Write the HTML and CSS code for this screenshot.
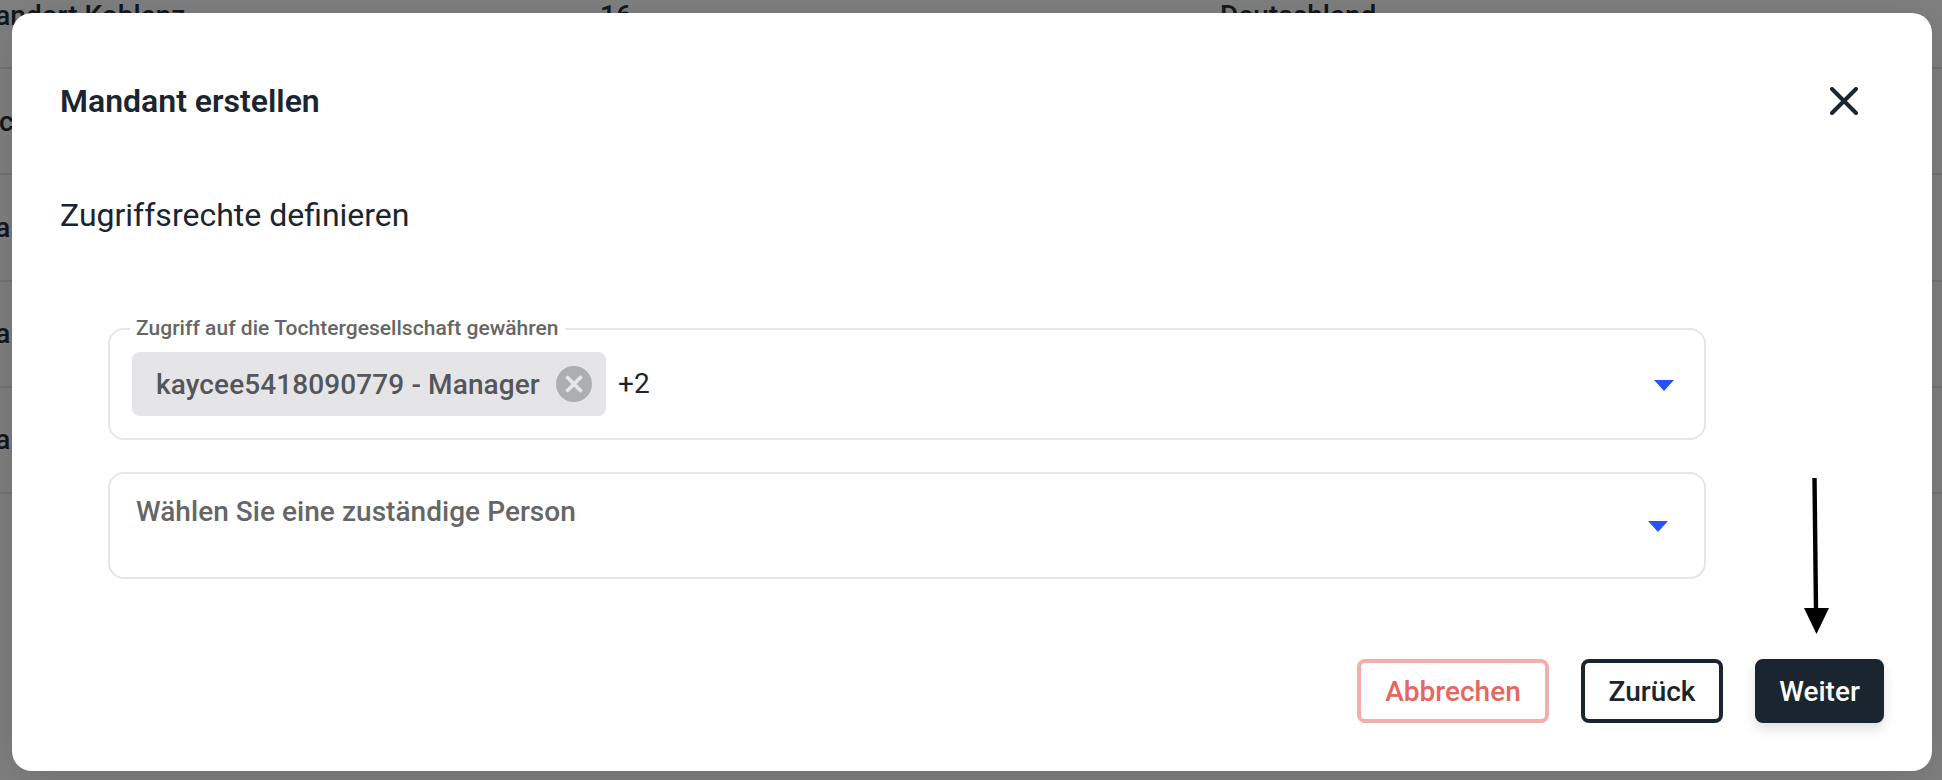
FILE: index.html
```html
<!DOCTYPE html>
<html lang="de">
<head>
<meta charset="utf-8">
<title>Mandant erstellen</title>
<link rel="stylesheet" href="styles.css">
</head>
<body>
<div class="table">
  <div class="row"><span class="name">Standort Koblenz</span><span class="count">16</span><span class="country">Deutschland</span></div>
  <div class="row"><span class="name">Fact</span></div>
  <div class="row"><span class="name">Sta</span></div>
  <div class="row"><span class="name">Sta</span></div>
  <div class="row"><span class="name">Sta</span></div>
</div>
<div class="backdrop"></div>
<section class="modal">
  <header class="modal-head">
    <h1 class="title">Mandant erstellen</h1>
    <svg class="close" viewBox="0 0 28 28" width="28" height="28"><path d="M2 2 26 26M26 2 2 26" fill="none" stroke="#1a2530" stroke-width="4" stroke-linecap="round"/></svg>
  </header>
  <h2 class="subtitle">Zugriffsrechte definieren</h2>
  <div class="field field-multi">
    <span class="legend">Zugriff auf die Tochtergesellschaft gewähren</span>
    <span class="chip">
      <span class="chip-text">kaycee5418090779 - Manager</span>
      <svg class="chip-x" viewBox="0 0 36 36" width="36" height="36"><circle cx="18" cy="18" r="18" fill="#adaeb2"/><path d="M11.5 11.5 24.5 24.5M24.5 11.5 11.5 24.5" stroke="#e6e6e9" stroke-width="3.8" stroke-linecap="round"/></svg>
    </span>
    <span class="more">+2</span>
    <span class="caret caret-multi"></span>
  </div>
  <div class="field field-single">
    <span class="placeholder">Wählen Sie eine zuständige Person</span>
    <span class="caret caret-single"></span>
  </div>
  <div class="actions">
    <button class="btn btn-cancel">Abbrechen</button>
    <button class="btn btn-back">Zurück</button>
    <button class="btn btn-next">Weiter</button>
  </div>
  <svg class="arrow" viewBox="0 0 30 156" width="30" height="156"><path d="M13.5 0 15 132" fill="none" stroke="#000" stroke-width="4.4"/><path d="M3 130H28L15.5 156Z" fill="#000"/></svg>
</section>
</body>
</html>
```
FILE: styles.css
```css
* { box-sizing: border-box; }
html, body { margin: 0; height: 100%; }
body {
  width: 1942px;
  height: 780px;
  overflow: hidden;
  position: relative;
  background: #fff;
  font-family: Roboto, "Liberation Sans", sans-serif;
  color: #1a2530;
}
.table { margin-top: -37px; }
.row {
  height: 106.2px;
  display: flex;
  align-items: center;
  border-bottom: 2px solid #e4e4e4;
  font-size: 28px;
  font-weight: 500;
  color: #27313c;
}
.name { width: 631px; margin-left: -31px; flex: none; }
.count { width: 620px; flex: none; }
.backdrop {
  position: absolute;
  inset: 0;
  background: rgba(0, 0, 0, 0.5);
}
.modal {
  position: absolute;
  left: 12px;
  top: 13px;
  width: 1920px;
  height: 758px;
  padding: 64px 48px 0;
  background: #fff;
  border-radius: 20px;
  box-shadow: 0 8px 40px rgba(0, 0, 0, 0.12);
}
.modal-head {
  height: 48px;
  display: flex;
  align-items: center;
  justify-content: space-between;
}
.title {
  margin: 0;
  font-size: 32px;
  font-weight: 600;
  line-height: 48px;
}
.close { margin-right: 26px; }
.subtitle {
  margin: 70px 0 0;
  font-size: 32px;
  font-weight: 400;
  line-height: 40px;
}
.field {
  position: relative;
  margin-left: 48px;
  width: 1598px;
  border: 2px solid #e6e6e6;
  border-radius: 16px;
  display: flex;
}
.field-multi {
  margin-top: 93px;
  height: 112px;
  padding-left: 22px;
  align-items: center;
}
.field-single {
  margin-top: 32px;
  height: 107px;
  padding: 23px 0 0 26px;
  align-items: flex-start;
}
.legend {
  position: absolute;
  left: 20px;
  top: -13px;
  padding: 0 6px;
  background: #fff;
  font-size: 21px;
  font-weight: 500;
  line-height: 22px;
  letter-spacing: 0.03px;
  color: #666;
}
.chip {
  width: 474px;
  height: 64px;
  padding: 0 14px 0 24px;
  display: flex;
  align-items: center;
  justify-content: space-between;
  background: #e5e5e8;
  border-radius: 8px;
}
.chip-text {
  font-size: 28px;
  font-weight: 500;
  letter-spacing: 0.1px;
  color: #55565a;
  white-space: nowrap;
}
.more {
  margin-left: 12px;
  font-size: 28px;
  line-height: 30px;
}
.placeholder {
  font-size: 28px;
  font-weight: 500;
  line-height: 30px;
  letter-spacing: 0.04px;
  color: #666;
}
.caret {
  margin-left: auto;
  width: 0;
  height: 0;
  border-left: 10px solid transparent;
  border-right: 10px solid transparent;
  border-top: 11px solid #2553f5;
}
.caret-multi { margin-right: 30px; margin-top: 2px; }
.caret-single { margin-right: 36px; margin-top: 24px; }
.actions {
  margin-top: 80px;
  display: flex;
  justify-content: flex-end;
  gap: 32px;
}
.btn {
  height: 64px;
  padding: 0;
  border-radius: 8px;
  font-family: inherit;
  font-size: 28px;
  font-weight: 500;
  background: #fff;
  border: 4px solid;
}
.btn-cancel { width: 192px; border-color: #f2aeaa; color: #e8665f; }
.btn-back { width: 142px; border-color: #1a2530; color: #1a2530; }
.btn-next {
  width: 129px;
  background: #1a2530;
  border-color: #1a2530;
  color: #fff;
  box-shadow: 0 6px 12px rgba(26, 37, 48, 0.14);
}
.arrow {
  position: absolute;
  left: 1789px;
  top: 465px;
}
```
